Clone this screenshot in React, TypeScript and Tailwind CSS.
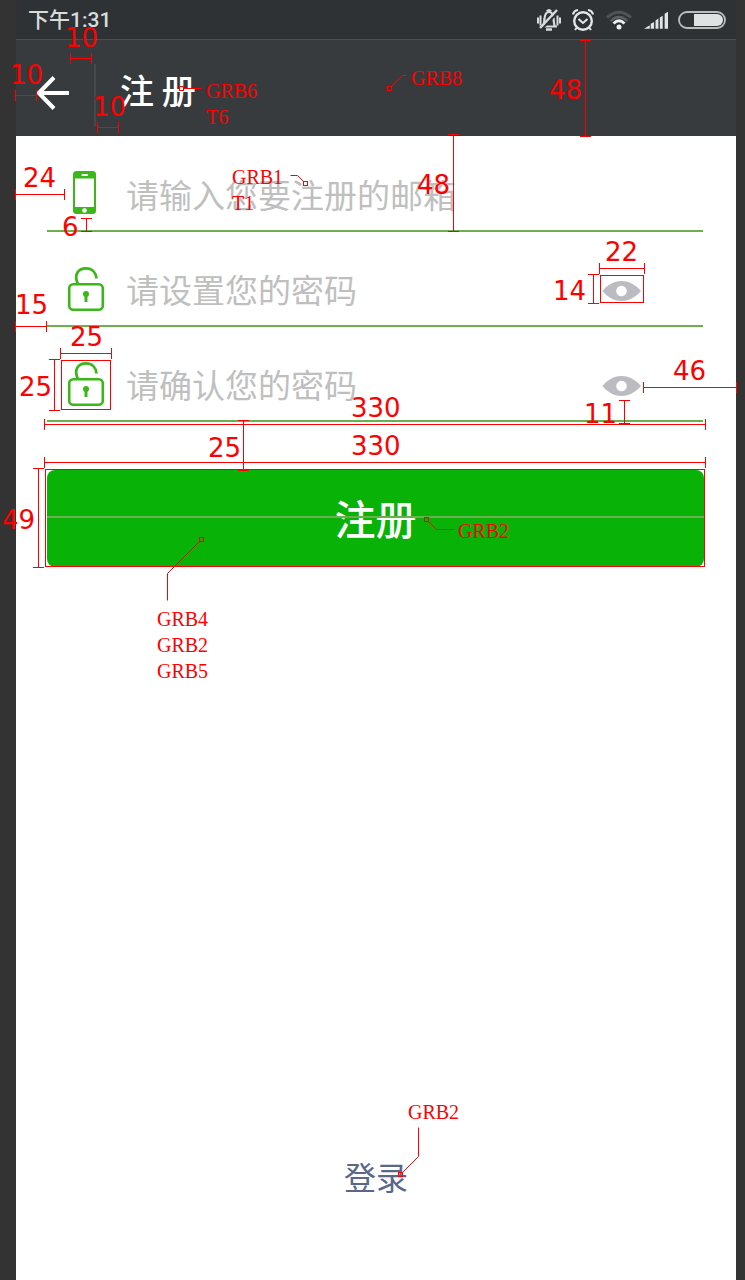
import React from 'react';

const CJK = "font-['Noto_Sans_CJK_SC',sans-serif]";

function MutedBellIcon() {
  return (
    <svg width="26" height="24" viewBox="0 0 26 24" fill="none" stroke="#d9dcdd" strokeWidth="2.200">
      <path d="M5 18.500h16M7 18.500c1.500-2.500 1-5 1.500-8C9 6 10.500 4 13 4s4 2 4.500 6.500c.5 3 0 5.500 1.500 8" />
      <path d="M11 3.500Q13 1 15 3.500M10 21.500h6" strokeWidth="2.500" />
      <path d="M4.500 7.500v10M2 9.500v6M21.500 7.500v10M24 9.500v6" strokeWidth="2" />
      <path d="M6 21L22 4" stroke="#2e3235" strokeWidth="2" />
      <path d="M4 20L21 2" strokeWidth="2.400" />
    </svg>
  );
}

function AlarmIcon() {
  return (
    <svg width="22" height="24" viewBox="0 0 22 24" fill="none" stroke="#e4e7e8" strokeWidth="2.400">
      <circle cx="11" cy="13" r="8.800" />
      <path d="M6.500 11l4.500 4 4.500-4" strokeWidth="2" />
      <path d="M1 6.500Q2 2.500 6 2M21 6.500Q20 2.500 16 2" strokeWidth="2.200" />
      <path d="M5 19.500l-2 2.500M17 19.500l2 2.500" strokeWidth="2" />
    </svg>
  );
}

function WifiIcon() {
  return (
    <svg width="26" height="20" viewBox="0 0 26 20" fill="none">
      <path d="M1 7.500Q13-3 25 7.500" stroke="#505457" strokeWidth="3" />
      <path d="M4.500 11Q13 3 21.500 11" stroke="#5c6063" strokeWidth="2.200" />
      <path d="M7.500 13.500Q13 8 18.500 13.500" stroke="#eef0f0" strokeWidth="2.800" />
      <circle cx="13" cy="17" r="2.500" fill="#eef0f0" />
    </svg>
  );
}

function SignalIcon() {
  return (
    <svg width="24" height="18" viewBox="0 0 25 18" fill="#e1e4e5">
      <path d="M0 18l6-3.500V18zM7 13l3.500-2v7H7zM12 9.500l3-2V18h-3zM16.500 6.500l3-2V18h-3zM21.500 2.500l3.500-2V18h-3.500z" />
    </svg>
  );
}

function BatteryIcon() {
  return (
    <svg width="48" height="18" viewBox="0 0 48 18" fill="none">
      <rect x="1" y="1" width="46" height="16" rx="8" stroke="#b9bdbe" strokeWidth="1.800" />
      <path d="M16 3h23a6 6 0 010 12H16z" fill="#dfe2e2" />
    </svg>
  );
}

function PhoneIcon() {
  return (
    <svg width="50" height="50" viewBox="0 0 50 50">
      <rect x="12" y="0" width="23" height="43" rx="3.500" fill="#3cb71a" />
      <rect x="14" y="7.500" width="19" height="28.500" fill="#fff" />
      <rect x="20.500" y="3" width="6.500" height="2" rx="1" fill="#fff" />
      <circle cx="23.500" cy="39.500" r="2.300" fill="#fff" />
    </svg>
  );
}

function LockIcon() {
  return (
    <svg width="50" height="50" viewBox="0 0 50 50" fill="none" stroke="#3cb71a">
      <rect x="8.200" y="18.200" width="33.600" height="25.600" rx="4" strokeWidth="2.600" />
      <path d="M17 18C12.500 9 17 2.300 25 2.300c6 0 10 4.200 10.500 10.200" strokeWidth="2.800" />
      <circle cx="25" cy="28" r="3" fill="#3cb71a" stroke="none" />
      <path d="M25 29v7" strokeWidth="3" />
    </svg>
  );
}

function EyeIcon() {
  return (
    <svg width="44" height="28" viewBox="0 0 44 28">
      <path
        d="M2.500 14C7 8.500 13 4 21.500 4S36 8.500 41 14c-5 5.500-11 10-19.500 10S7 19.500 2.500 14z"
        fill="#bcbbc1"
      />
      <circle cx="21.500" cy="14" r="5.300" fill="#fff" />
    </svg>
  );
}

type FieldProps = { id: string; type: string; placeholder: string; icon: React.ReactNode; reveal?: boolean };

function Field({ id, type, placeholder, icon, reveal }: FieldProps) {
  return (
    <div className="flex h-[95px] items-center border-b-2 border-[#6ab04c] pt-6 pl-[14px] pr-[59px]">
      <label htmlFor={id} aria-label={placeholder} className="shrink-0">
        {icon}
      </label>
      <input
        id={id}
        type={type}
        placeholder={placeholder}
        className={`ml-[15px] h-[52px] min-w-0 flex-1 bg-transparent pb-1 text-[33px] leading-[48px] text-gray-700 outline-none placeholder:text-[#bfbfbf] ${CJK}`}
      />
      {reveal && (
        <button type="button" aria-label="显示密码" className="shrink-0">
          <EyeIcon />
        </button>
      )}
    </div>
  );
}

const horizontals = [
  [70, 91, 58], [15, 36, 95], [97, 118, 127], [15, 64, 194], [599, 644, 268],
  [15, 46, 326], [60, 111, 353], [643, 736, 387], [44, 705, 424], [44, 705, 462],
];

const verticals = [
  [585, 40, 136], [453, 134, 231], [86, 218, 231], [593, 274, 303],
  [54, 359, 410], [624, 400, 423], [243, 420, 470], [38, 468, 567],
];

const frames = [
  [600, 275, 43, 27], [61, 360, 49, 49], [45, 469, 659, 97],
  [179, 86, 4, 4], [387, 86, 4, 4], [303, 181, 4, 4],
  [424, 517, 4, 4], [199, 537, 4, 4], [398, 1172, 4, 4],
];

const leaders = [
  'M183 88H201', 'M391 86L402 75H406', 'M303 181L297 175H290',
  'M428 521L436 529H453', 'M199 541L167 573V600', 'M402 1172L418 1156V1127',
];

const sizes = [
  { text: '10', place: 'left-[65px] top-[25px]' },
  { text: '10', place: 'left-[10px] top-[62px]' },
  { text: '10', place: 'left-[93px] top-[94px]' },
  { text: '48', place: 'left-[549px] top-[77px]' },
  { text: '24', place: 'left-[23px] top-[165px]' },
  { text: '6', place: 'left-[62px] top-[214px]' },
  { text: '48', place: 'left-[417px] top-[172px]' },
  { text: '22', place: 'left-[605px] top-[239px]' },
  { text: '14', place: 'left-[553px] top-[278px]' },
  { text: '15', place: 'left-[15px] top-[292px]' },
  { text: '25', place: 'left-[70px] top-[324px]' },
  { text: '25', place: 'left-[19px] top-[374px]' },
  { text: '46', place: 'left-[673px] top-[358px]' },
  { text: '11', place: 'left-[584px] top-[401px]' },
  { text: '330', place: 'left-[351px] top-[395px]' },
  { text: '330', place: 'left-[351px] top-[433px]' },
  { text: '25', place: 'left-[208px] top-[435px]' },
  { text: '49', place: 'left-[2px] top-[507px]' },
];

const codes = [
  { lines: ['GRB6', 'T6'], place: 'left-[206px] top-[78px]' },
  { lines: ['GRB8'], place: 'left-[411px] top-[65px]' },
  { lines: ['GRB1', 'T1'], place: 'left-[232px] top-[164px]' },
  { lines: ['GRB2'], place: 'left-[458px] top-[518px]' },
  { lines: ['GRB4', 'GRB2', 'GRB5'], place: 'left-[157px] top-[606px]' },
  { lines: ['GRB2'], place: 'left-[408px] top-[1099px]' },
];

function Annotations() {
  return (
    <div className="pointer-events-none absolute inset-0 overflow-hidden text-[#ff0000]">
      <svg width="745" height="1280" viewBox="-0.5 -0.5 745 1280" fill="none" stroke="#ff0000" className="absolute left-0 top-0">
        {horizontals.map(([a, b, y]) => (
          <path key={`h${a}-${y}`} d={`M${a} ${y}H${b}M${a} ${y - 5.5}V${y + 5.5}M${b} ${y - 5.5}V${y + 5.5}`} />
        ))}
        {verticals.map(([x, a, b]) => (
          <path key={`v${x}`} d={`M${x} ${a}V${b}M${x - 5.5} ${a}H${x + 5.5}M${x - 5.5} ${b}H${x + 5.5}`} />
        ))}
        {frames.map(([x, y, w, h]) => (
          <rect key={`f${x}-${y}`} x={x} y={y} width={w} height={h} />
        ))}
        {leaders.map((d) => (
          <path key={d} d={d} />
        ))}
      </svg>
      {sizes.map(({ text, place }) => (
        <span key={place} className={`absolute font-['DejaVu_Sans',sans-serif] text-[26px] leading-[26px] ${place}`}>
          {text}
        </span>
      ))}
      {codes.map(({ lines, place }) => (
        <div key={place} className={`absolute font-['Liberation_Serif',serif] text-[20px] leading-[26px] ${place}`}>
          {lines.map((line) => (
            <p key={line}>{line}</p>
          ))}
        </div>
      ))}
    </div>
  );
}

export default function App() {
  return (
    <div className="relative flex min-h-screen flex-col bg-[#333333] pl-4 pr-[9px]">
      <div className="flex h-10 items-center justify-between border-b border-[#4b4f51] bg-[#2e3235] pl-3 pr-[10px]">
        <span className="font-['Roboto','Noto_Sans_CJK_SC',sans-serif] text-[21px] leading-6 font-medium text-[#d9dcdd]">下午1:31</span>
        <div className="flex items-center gap-[10px]">
          <MutedBellIcon />
          <AlarmIcon />
          <span className="ml-0.5"><WifiIcon /></span>
          <span className="ml-0.5"><SignalIcon /></span>
          <BatteryIcon />
        </div>
      </div>

      <header className="flex h-24 items-center bg-[#373b3e] pt-[10px] pl-5">
        <button type="button" aria-label="返回" className="shrink-0">
          <svg width="34" height="34" viewBox="0 0 34 34" fill="none" stroke="#fff" strokeWidth="4">
            <path d="M33 17H3M18 1.500L2.800 17 18 32.500" />
          </svg>
        </button>
        <span className="mb-[10px] ml-6 h-[62px] w-0.5 self-end bg-[#46494c]" />
        <h1 className={`ml-6 pb-[6px] text-[34px] leading-[48px] font-medium text-white ${CJK}`}>注 册</h1>
      </header>

      <main className="flex flex-1 flex-col bg-white pb-20">
        <form className="ml-[31px] mr-8 pt-px" onSubmit={(e) => e.preventDefault()}>
          <div className="mr-px">
            <Field id="email" type="email" placeholder="请输入您要注册的邮箱" icon={<PhoneIcon />} />
            <Field id="password" type="password" placeholder="请设置您的密码" icon={<LockIcon />} reveal />
            <Field id="confirm" type="password" placeholder="请确认您的密码" icon={<LockIcon />} reveal />
          </div>
          <button
            type="submit"
            className={`relative mt-12 h-[97px] w-full rounded-lg bg-[#09b207] pb-1 text-[41px] leading-[60px] font-medium text-white ${CJK}`}
          >
            注册
            <span className="absolute inset-x-0 top-[46px] h-0.5 bg-[#6ab04c]" />
          </button>
        </form>
        <a href="#login" className={`mt-auto self-center text-[32px] leading-[48px] text-[#5b6788] ${CJK}`}>
          登录
        </a>
      </main>

      <Annotations />
    </div>
  );
}
